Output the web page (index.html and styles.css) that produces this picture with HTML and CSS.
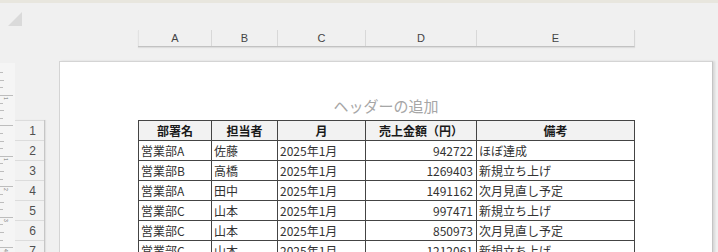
FILE: index.html
```html
<!DOCTYPE html>
<html lang="ja">
<head>
<meta charset="utf-8">
<title>ページレイアウト</title>
<link rel="stylesheet" href="styles.css">
</head>
<body>
<div class="topstrip"></div>
<div class="top">
  <svg class="corner" width="14" height="14" viewBox="0 0 14 14"><polygon points="14,0 14,14 0,14" fill="#dadada"/></svg>
  <div class="colheads">
    <div class="ch w1">A</div>
    <div class="ch w2">B</div>
    <div class="ch w3">C</div>
    <div class="ch w4">D</div>
    <div class="ch w5">E</div>
  </div>
</div>
<div class="main">
  <svg class="ruler" width="15" height="191" viewBox="0 0 15 191">
    <rect x="0" y="0" width="15" height="191" fill="#f5f5f5"/>
    <g stroke="#bdbdbd" stroke-width="1">
      <line x1="0" y1="9.5" x2="3" y2="9.5"/>
      <line x1="0" y1="17.5" x2="4" y2="17.5"/>
      <line x1="0" y1="24.5" x2="3" y2="24.5"/>
      <line x1="0" y1="32.5" x2="13" y2="32.5"/>
      <line x1="0" y1="40.5" x2="3" y2="40.5"/>
      <line x1="0" y1="47.5" x2="4" y2="47.5"/>
      <line x1="0" y1="55.5" x2="3" y2="55.5"/>
      <line x1="0" y1="62.5" x2="13" y2="62.5"/>
      <line x1="0" y1="70.5" x2="3" y2="70.5"/>
      <line x1="0" y1="78.5" x2="4" y2="78.5"/>
      <line x1="0" y1="85.5" x2="3" y2="85.5"/>
      <line x1="0" y1="93.5" x2="13" y2="93.5"/>
      <line x1="0" y1="100.5" x2="3" y2="100.5"/>
      <line x1="0" y1="108.5" x2="4" y2="108.5"/>
      <line x1="0" y1="116.5" x2="3" y2="116.5"/>
      <line x1="0" y1="123.5" x2="13" y2="123.5"/>
      <line x1="0" y1="131.5" x2="3" y2="131.5"/>
      <line x1="0" y1="139.5" x2="4" y2="139.5"/>
      <line x1="0" y1="146.5" x2="3" y2="146.5"/>
      <line x1="0" y1="154.5" x2="13" y2="154.5"/>
      <line x1="0" y1="161.5" x2="3" y2="161.5"/>
      <line x1="0" y1="169.5" x2="4" y2="169.5"/>
      <line x1="0" y1="177.5" x2="3" y2="177.5"/>
      <line x1="0" y1="184.5" x2="13" y2="184.5"/>
    </g>
    <g class="rnum" fill="#777">
      <text transform="translate(4,34) rotate(90)">1</text>
      <text transform="translate(4,95) rotate(90)">1</text>
      <text transform="translate(4,125) rotate(90)">2</text>
      <text transform="translate(4,156) rotate(90)">3</text>
      <text transform="translate(4,186) rotate(90)">4</text>
    </g>
  </svg>
  <div class="rowheads">
    <div class="rh">1</div>
    <div class="rh">2</div>
    <div class="rh">3</div>
    <div class="rh">4</div>
    <div class="rh">5</div>
    <div class="rh">6</div>
    <div class="rh">7</div>
  </div>
  <div class="page">
    <div class="pghead">ヘッダーの追加</div>
    <table class="sheet">
      <colgroup>
        <col class="c1"><col class="c2"><col class="c3"><col class="c4"><col class="c5">
      </colgroup>
      <thead>
        <tr><th>部署名</th><th>担当者</th><th>月</th><th>売上金額（円）</th><th>備考</th></tr>
      </thead>
      <tbody>
        <tr><td>営業部A</td><td>佐藤</td><td>2025年1月</td><td class="num">942722</td><td>ほぼ達成</td></tr>
        <tr><td>営業部B</td><td>高橋</td><td>2025年1月</td><td class="num">1269403</td><td>新規立ち上げ</td></tr>
        <tr><td>営業部A</td><td>田中</td><td>2025年1月</td><td class="num">1491162</td><td>次月見直し予定</td></tr>
        <tr><td>営業部C</td><td>山本</td><td>2025年1月</td><td class="num">997471</td><td>新規立ち上げ</td></tr>
        <tr><td>営業部C</td><td>山本</td><td>2025年1月</td><td class="num">850973</td><td>次月見直し予定</td></tr>
        <tr><td>営業部C</td><td>山本</td><td>2025年1月</td><td class="num">1212061</td><td>新規立ち上げ</td></tr>
      </tbody>
    </table>
  </div>
</div>
</body>
</html>
```
FILE: styles.css
```css
html, body {
  margin: 0;
  padding: 0;
  width: 718px;
  height: 252px;
  overflow: hidden;
  background: #f0f0f0;
  font-family: "Noto Sans CJK JP", "Noto Sans", sans-serif;
}

.topstrip {
  height: 3px;
  background: #e8e6de;
}

.top {
  height: 58px;
  display: flex;
  align-items: flex-start;
}

.corner {
  display: block;
  margin: 9px 0 0 8px;
}

.colheads {
  margin: 27px 0 0 116px;
  display: flex;
  height: 17px;
  box-sizing: border-box;
  border-bottom: 1px solid #c2c2c2;
  border-right: 1px solid #d6d6d6;
  box-shadow: 0 1px 1px rgba(0, 0, 0, 0.08);
}

.ch {
  box-sizing: border-box;
  border-left: 1px solid #d8d8d8;
  font-family: "Liberation Sans", "DejaVu Sans", sans-serif;
  font-size: 11px;
  line-height: 12px;
  padding-top: 2px;
  color: #444;
  text-align: center;
}

.ch.w1 { width: 73px; border-left-color: #e2e2e2; }
.ch.w2 { width: 66px; }
.ch.w3 { width: 88px; }
.ch.w4 { width: 111px; }
.ch.w5 { width: 158px; }

.main {
  display: flex;
  align-items: flex-start;
  height: 191px;
}

.ruler {
  display: block;
  margin-top: 2px;
  flex: none;
}

.rnum {
  font-family: "Liberation Sans", sans-serif;
  font-size: 5px;
}

.rowheads {
  margin-top: 59px;
  width: 30px;
  flex: none;
  box-sizing: border-box;
  border-right: 1px solid #c6c6c6;
  box-shadow: 1px 0 1px rgba(0, 0, 0, 0.06);
  background: #f2f2f2;
}

.rh {
  height: 20px;
  box-sizing: border-box;
  border-top: 1px solid #dcdcdc;
  font-family: "Liberation Sans", "DejaVu Sans", sans-serif;
  font-size: 12px;
  line-height: 21px;
  color: #505050;
  text-align: center;
  padding-left: 6px;
}

.page {
  margin-left: 14px;
  width: 654px;
  height: 200px;
  flex: none;
  box-sizing: border-box;
  background: #ffffff;
  border: 1px solid #d4d4d4;
  border-right-color: #c4c4c4;
  box-shadow: 2px 0 2px rgba(0, 0, 0, 0.1);
}

.pghead {
  height: 58px;
  box-sizing: border-box;
  padding-top: 34px;
  font-size: 15px;
  line-height: 20px;
  color: #a6a6a6;
  text-align: center;
}

.sheet {
  margin-left: 78px;
  width: 497px;
  table-layout: fixed;
  border-collapse: collapse;
  font-size: 12px;
  color: #333;
}

.c1 { width: 73px; }
.c2 { width: 66px; }
.c3 { width: 88px; }
.c4 { width: 111px; }
.c5 { width: 158px; }

.sheet tr {
  height: 20px;
}

.sheet th,
.sheet td {
  border: 1px solid #444;
  padding: 0 2px;
  line-height: 18px;
  white-space: nowrap;
  overflow: hidden;
  vertical-align: middle;
}

.sheet th {
  background: #f2f2f2;
  font-weight: bold;
  color: #1a1a1a;
  text-align: center;
}

.sheet td {
  text-align: left;
}

.sheet td.num {
  text-align: right;
  padding-right: 3px;
}
```
